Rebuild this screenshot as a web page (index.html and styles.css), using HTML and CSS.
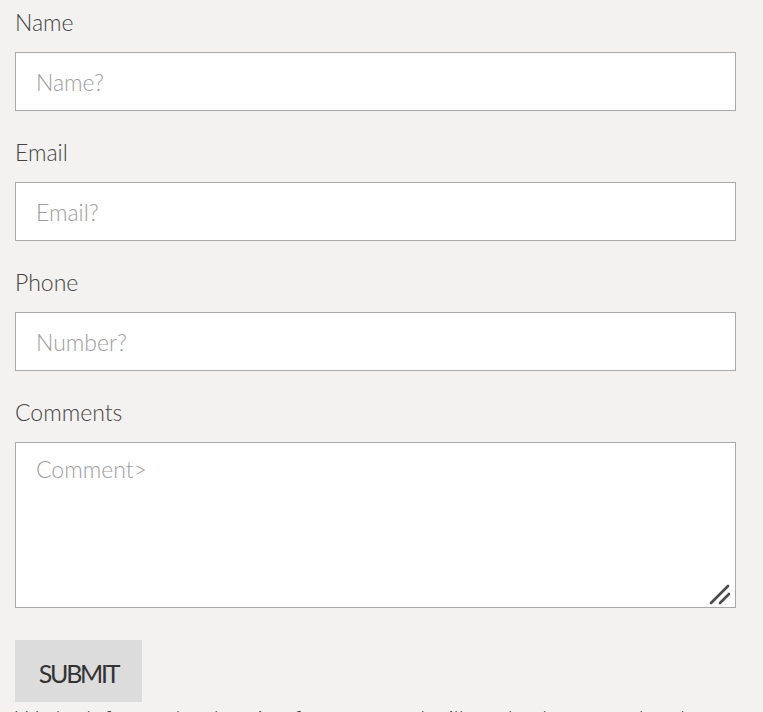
FILE: index.html
```html
<!DOCTYPE html>
<html lang="en">
<head>
<meta charset="utf-8">
<title>Contact</title>
<link rel="stylesheet" href="styles.css">
</head>
<body>
<form class="contact-form">
  <div class="field">
    <label class="field-label" for="name">Name</label>
    <input class="field-input" id="name" type="text" placeholder="Name?">
  </div>
  <div class="field">
    <label class="field-label" for="email">Email</label>
    <input class="field-input" id="email" type="email" placeholder="Email?">
  </div>
  <div class="field">
    <label class="field-label" for="phone">Phone</label>
    <input class="field-input" id="phone" type="tel" placeholder="Number?">
  </div>
  <div class="field">
    <label class="field-label" for="comments">Comments</label>
    <div class="textarea-wrap">
      <textarea class="field-input field-textarea" id="comments" placeholder="Comment&gt;"></textarea>
      <svg class="resize-grip" width="24" height="22" viewBox="0 0 24 22" aria-hidden="true">
        <line x1="2" y1="20" x2="19" y2="3" stroke="#4a4a4a" stroke-width="2.6" stroke-linecap="round"/>
        <line x1="11" y1="20" x2="20" y2="11" stroke="#4a4a4a" stroke-width="2.6" stroke-linecap="round"/>
      </svg>
    </div>
  </div>
  <button class="submit-btn" type="submit">SUBMIT</button>
  <p class="note">We look forward to hearing from you and will get back to you shortly with details.</p>
</form>
</body>
</html>
```

FILE: styles.css
```css
html, body {
  margin: 0;
  padding: 0;
  background: #f3f2f0;
}

body {
  font-family: Lato, "Open Sans", sans-serif;
  font-weight: 300;
  color: #444444;
}

.contact-form {
  padding: 7px 27px 0 15px;
  display: flex;
  flex-direction: column;
}

.field {
  display: flex;
  flex-direction: column;
  margin-bottom: 26px;
}

.field-label {
  font-size: 23px;
  line-height: 30px;
  margin-bottom: 15px;
}

.field-input {
  box-sizing: border-box;
  width: 100%;
  height: 59px;
  margin: 0;
  padding: 0 20px;
  border: 1px solid #a9a9a9;
  border-radius: 0;
  background: #ffffff;
  font-family: Lato, "Open Sans", sans-serif;
  font-weight: 300;
  font-size: 23px;
  line-height: 30px;
  color: #3e3e3e;
  outline: none;
}

.field-input::placeholder {
  color: #9d9d9d;
  opacity: 1;
}

.textarea-wrap {
  position: relative;
}

.field-textarea {
  height: 166px;
  padding: 11px 20px;
  display: block;
  resize: none;
}

.resize-grip {
  position: absolute;
  right: 3px;
  bottom: 3px;
}

.submit-btn {
  align-self: flex-start;
  margin: 6px 0 0;
  height: 62px;
  width: 127px;
  padding: 4px 0 0;
  border: none;
  background: #dcdcdc;
  font-family: Lato, sans-serif;
  font-weight: 400;
  font-size: 25px;
  letter-spacing: -2.3px;
  color: #333333;
  cursor: pointer;
}

.note {
  margin: 2px 0 0;
  font-size: 23px;
  line-height: 30px;
  color: #3e3e3e;
}
```
